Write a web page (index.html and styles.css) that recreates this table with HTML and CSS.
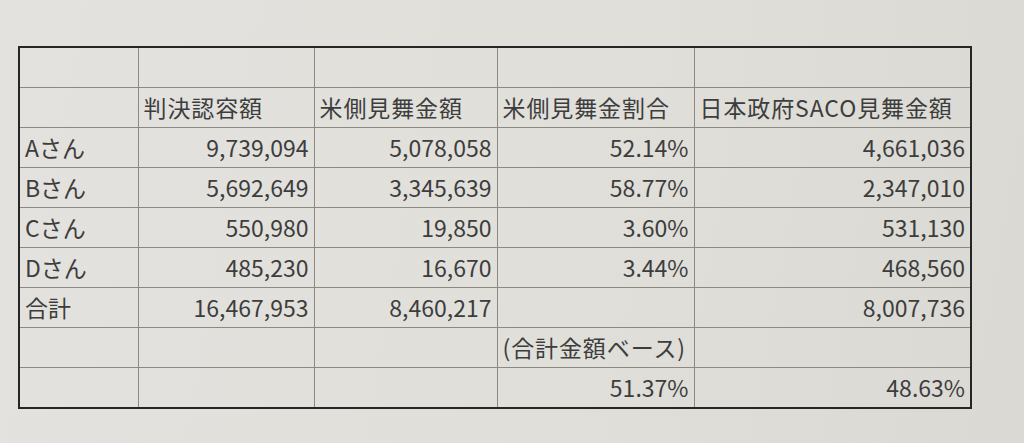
FILE: index.html
```html
<!DOCTYPE html>
<html lang="ja">
<head>
<meta charset="utf-8">
<link rel="stylesheet" href="styles.css">
</head>
<body>
<div class="paper">
  <table class="sheet">
    <colgroup>
      <col class="c1"><col class="c2"><col class="c3"><col class="c4"><col class="c5">
    </colgroup>
    <tbody>
      <tr><td></td><td></td><td></td><td></td><td></td></tr>
      <tr class="head"><td></td><td>判決認容額</td><td>米側見舞金額</td><td>米側見舞金割合</td><td>日本政府SACO見舞金額</td></tr>
      <tr><td>Aさん</td><td class="num">9,739,094</td><td class="num">5,078,058</td><td class="num">52.14%</td><td class="num">4,661,036</td></tr>
      <tr><td>Bさん</td><td class="num">5,692,649</td><td class="num">3,345,639</td><td class="num">58.77%</td><td class="num">2,347,010</td></tr>
      <tr><td>Cさん</td><td class="num">550,980</td><td class="num">19,850</td><td class="num">3.60%</td><td class="num">531,130</td></tr>
      <tr><td>Dさん</td><td class="num">485,230</td><td class="num">16,670</td><td class="num">3.44%</td><td class="num">468,560</td></tr>
      <tr><td>合計</td><td class="num">16,467,953</td><td class="num">8,460,217</td><td></td><td class="num">8,007,736</td></tr>
      <tr class="head"><td></td><td></td><td></td><td>(合計金額ベース)</td><td></td></tr>
      <tr><td></td><td></td><td></td><td class="num">51.37%</td><td class="num">48.63%</td></tr>
    </tbody>
  </table>
</div>
</body>
</html>
```
FILE: styles.css
```css
html, body {
  margin: 0;
  padding: 0;
}
body {
  width: 1024px;
  height: 443px;
  overflow: hidden;
  background: linear-gradient(100deg, #e3e2de 0%, #e0dfda 55%, #dad9d4 100%);
  font-family: "Noto Sans CJK JP", "Noto Sans", sans-serif;
  color: #3d3d3d;
}
.paper {
  padding: 46px 0 0 18px;
}
.sheet {
  border-collapse: collapse;
  table-layout: fixed;
  border: 2px solid #262626;
  width: 952px;
}
.c1 { width: 119px; }
.c2 { width: 176px; }
.c3 { width: 183px; }
.c4 { width: 197px; }
.c5 { width: 277px; }
.sheet td {
  height: 39px;
  padding: 0 5px;
  border: 1px solid #8c8882;
  font-size: 23px;
  line-height: 1;
  white-space: nowrap;
  overflow: hidden;
  vertical-align: middle;
}
.sheet td.num {
  text-align: right;
}
.head td {
  letter-spacing: 0.9px;
}
```
